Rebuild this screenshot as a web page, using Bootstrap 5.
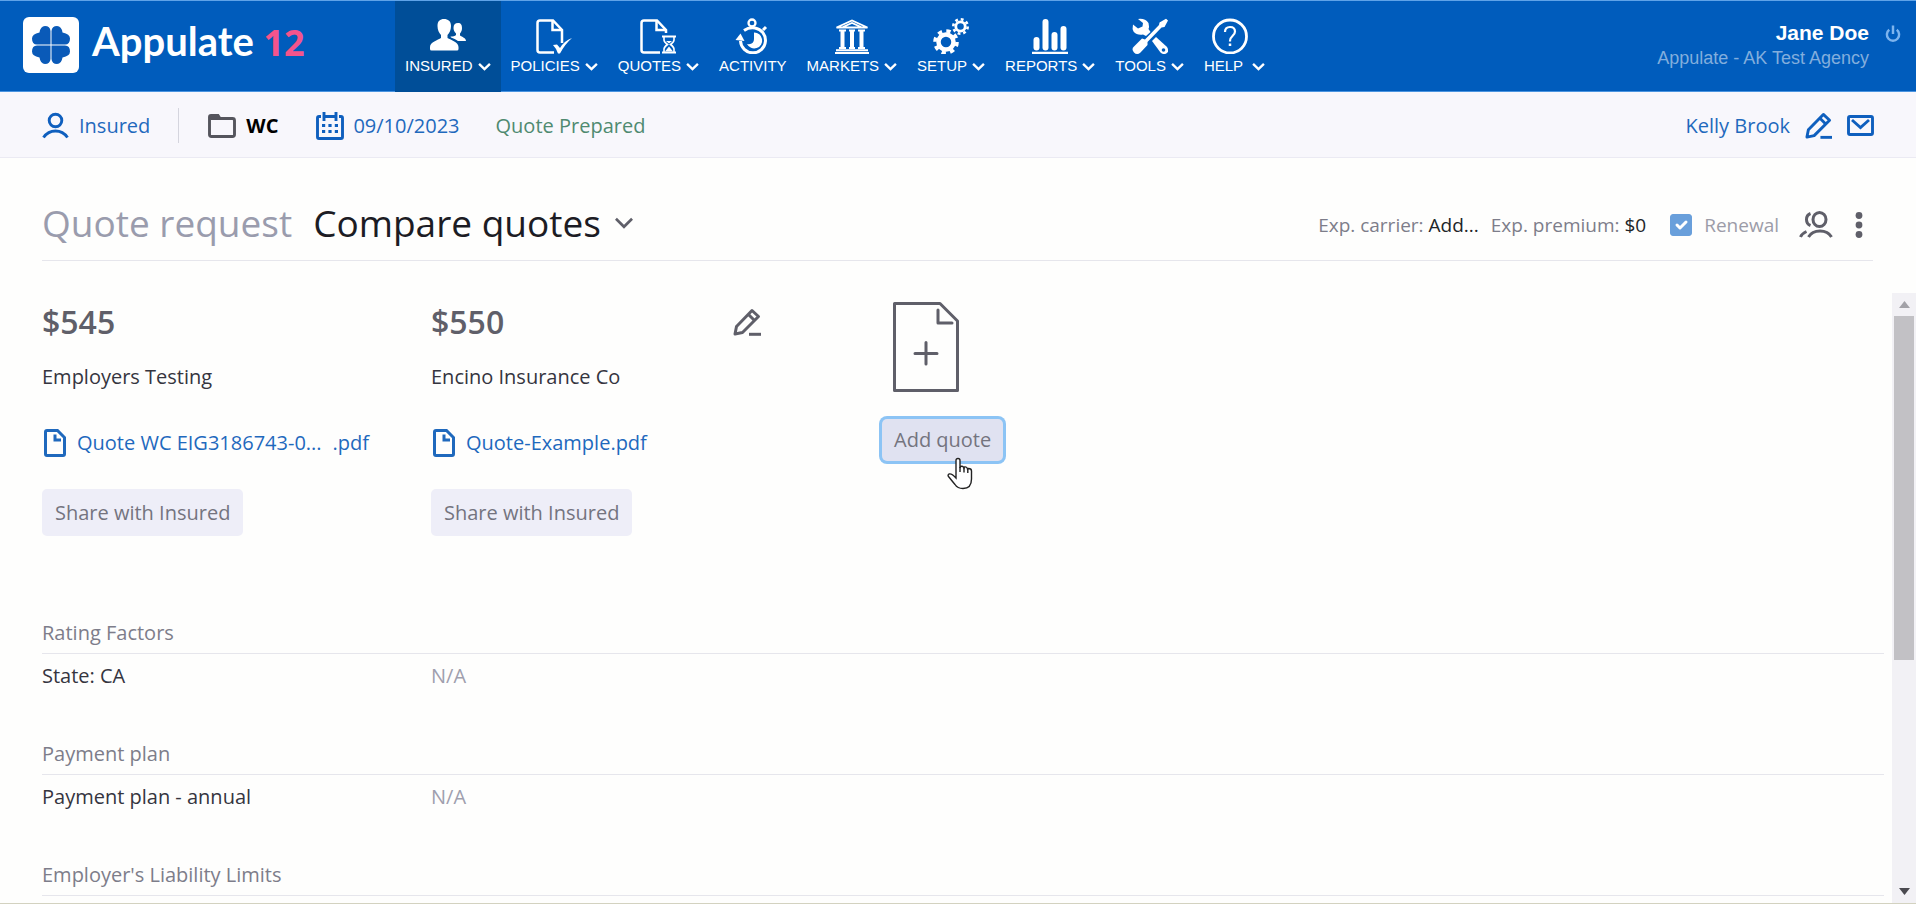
<!DOCTYPE html>
<html lang="en">
<head>
<meta charset="utf-8">
<meta name="viewport" content="width=device-width, initial-scale=1">
<title>Appulate - Compare quotes</title>
<link rel="stylesheet" href="https://cdn.jsdelivr.net/npm/bootstrap@5.3.0/dist/css/bootstrap.min.css">
<style>
  :root { --brand: #005cbc; --link: #1f69bd; --muted: #7d7d8a; --ink: #5f5f69; --line: #e6e6ec; }
  body { font-family: "Open Sans", sans-serif; font-size: 20px; line-height: 30px; color: #35353f; background: #fefefd; }
  a { color: var(--link); text-decoration: none; }
  svg { flex: none; display: block; }

  .topbar { background: var(--brand); height: 92px; border-top: 1px solid #5fa3e8; border-bottom: 1px solid #4a94e0; padding: 0 15px 0 23px; font-family: "Liberation Sans", sans-serif; }
  .brand-link { width: 372px; gap: 13px; }
  .brand-name { font: 700 40px/46px Lato, sans-serif; color: #fff; }
  .brand-name span { font: 700 36px/46px "Open Sans", sans-serif; color: #f4548c; }
  .topnav .nav-link { height: 91px; padding: 17px 10px 0; color: #fff; font-size: 15px; line-height: 18px; gap: 3px; }
  .topnav .nav-link.active { background: #004e98; height: 92px; }
  .nav-label { gap: 5px; }
  .user-name { font-size: 21px; line-height: 24px; font-weight: 700; color: #fff; }
  .user-agency { font-size: 18px; line-height: 26px; color: #82aedd; }

  .subbar { background: #f8f7fc; height: 66px; border-bottom: 1px solid #ebeaf3; padding: 2px 42px 0; }
  .subbar .rule { width: 1px; height: 35px; background: #d5d5de; margin: 0 29px 0 28px; }
  .subbar .pair { gap: 10px; }
  .subbar .date { margin-left: 38px; gap: 9px; }
  .subbar .status { color: #4f8a70; margin-left: 36px; }
  .subbar .tools { gap: 15px; }

  .page-head { margin: 0 43px 0 42px; height: 103px; border-bottom: 1px solid var(--line); }
  .title { font-size: 37px; line-height: 52px; font-weight: 400; padding-top: 28px; gap: 21px; }
  .title a { color: #9a9cad; }
  .title button { color: #1c1c24; background: none; border: 0; padding: 0; gap: 14px; }
  .facts { font-size: 19px; padding-top: 31px; }
  .soft { color: var(--muted); }
  .form-check-input.renew { width: 22px; height: 22px; margin: 0; border-radius: 3px; }
  .form-check-input.renew:checked { background-color: #699fdb; border-color: #699fdb; }
  .renew + label { color: #9c9ca8; }
  .icon-btn { border: 0; background: none; padding: 0; color: var(--ink); }
  .more { margin: 0 10px 0 22px; }

  .pane { padding: 0 8px 0 42px; }
  .quote { width: 389px; }
  .quote-price { font-size: 32px; line-height: 42px; font-weight: 600; color: var(--ink); }
  .edit-quote { margin-right: 59px; }
  .carrier { margin-top: 19px; }
  .file-link { gap: 11px; margin-top: 36px; padding-left: 2px; }
  .btn-soft { font-size: 20px; line-height: 30px; height: 47px; padding: 0 13px; background: #eeeef8; color: #74747f; border: 0; border-radius: 5px; }
  .btn-share { margin-top: 31px; }
  .btn-soft.is-focus { background: #e0e2f1; box-shadow: 0 0 0 3px #8cc4f5; height: 42px; padding: 0 12px; margin: 3px; }
  .add-quote { margin-left: 59px; padding-top: 1px; }
  .sheet { margin-left: 14px; }
  .pointer { left: 67px; top: 41px; }

  .factors { table-layout: fixed; margin: 58px 0 0; }
  .factors col.fit { width: 389px; }
  .factors th { font-weight: 400; color: var(--muted); padding: 24px 0 5px; border-bottom: 1px solid var(--line); }
  .factors td { padding: 7px 0 24px; }
  .factors .none { color: #a09fae; }

  .track { width: 24px; background: #f2f1f5; padding: 0 2px; flex: none; }
  .track .arrow { height: 23px; }
  .thumb { height: 61%; background: #c2c1c5; }
  .edge { height: 1px; background: #d3d2c0; flex: none; }
</style>
</head>
<body class="vh-100 d-flex flex-column overflow-hidden">

<svg width="0" height="0" class="position-absolute" aria-hidden="true">
  <symbol id="chev" viewBox="0 0 12 8"><path d="M1 1.5 6 6.3 11 1.5" fill="none" stroke="currentColor" stroke-width="2.2"/></symbol>
  <symbol id="pencil" viewBox="0 0 28 28"><g fill="none" stroke="currentColor" stroke-width="3" stroke-linejoin="round"><path d="M2 26 3.5 18.5 19 2.5 25.5 8.5 9.5 24.5Z"/><path d="M15.5 6.5 21.5 12.5"/></g><path d="M16 26.3H28" stroke="currentColor" stroke-width="3"/></symbol>
  <symbol id="file" viewBox="0 0 22 28"><path d="M3 1.5H13.5L20.5 8.5V25Q20.5 26.500 19 26.500H3Q1.500 26.500 1.500 25V3Q1.500 1.500 3 1.500Z" fill="none" stroke="currentColor" stroke-width="3"/><path d="M11 5.500V11H17" fill="none" stroke="currentColor" stroke-width="3"/></symbol>
</svg>

<header class="topbar d-flex flex-shrink-0">
  <a href="#" class="brand-link d-flex align-items-center pb-2 flex-shrink-0">
    <svg width="56" height="56" viewBox="0 0 56 56" class="align-self-start mt-3"><rect width="56" height="56" rx="6" fill="#fff"/>
      <g fill="#0a5ab8"><path id="leaf" d="M27.500 27.500V14Q27 9 22 9 17.500 9 16.500 15.500 9 17 9 21.500 9 27.500 14 27.500Z"/>
      <use href="#leaf" transform="matrix(-1 0 0 1 56 0)"/><use href="#leaf" transform="matrix(1 0 0 -1 0 56)"/><use href="#leaf" transform="matrix(-1 0 0 -1 56 56)"/></g></svg>
    <span class="brand-name">Appulate <span>12</span></span>
  </a>
  <nav aria-label="Main">
    <ul class="nav topnav flex-nowrap">
      <li><a href="#" class="nav-link active d-flex flex-column align-items-center"><svg width="36" height="36" viewBox="0 0 36 36" fill="#fff"><path d="M7.500 8C7.500 3 10 1 14 1S21 3 21 8C21 12 19.500 15 17.500 17V20C21 22 28.500 24 28.500 29V31Q28.500 32.500 27 32.500H1.500Q0 32.500 0 31V29C0 24 8 22 11 20V17C9 15 7.500 12 7.500 8Z"/><path d="M23.500 10C23.500 6.500 25 5 28 5S32 7 32 10 31 14 30 15.500V17.500C32 19 36 20 36 23H28C26 21.500 23.500 20.500 21 19.500L20.500 18.500C23 18.500 25 18 26 17V15.500C24.500 14 23.500 12 23.500 10Z"/></svg>
        <span class="nav-label d-flex align-items-center">INSURED <svg width="13" height="9"><use href="#chev"/></svg></span></a></li>
      <li><a href="#" class="nav-link d-flex flex-column align-items-center"><svg width="36" height="36" viewBox="0 0 36 36" fill="none" stroke="#fff" stroke-width="2.500"><path d="M18 34.500H4Q1.500 34.500 1.500 32V5Q1.500 2.500 4 2.500H17L26 12V25"/><path d="M16.500 2.500V12H26"/><path d="M17 27 21 26.500 24 30Q28 23 36 20 29 26 24 35.500H22Q20 30 17 27Z" fill="#fff" stroke="none"/></svg>
        <span class="nav-label d-flex align-items-center">POLICIES <svg width="13" height="9"><use href="#chev"/></svg></span></a></li>
      <li><a href="#" class="nav-link d-flex flex-column align-items-center"><svg width="36" height="36" viewBox="0 0 36 36" fill="none" stroke="#fff" stroke-width="2.500"><path d="M20 34.500H4Q1.500 34.500 1.500 32V5Q1.500 2.500 4 2.500H17L26 12V15"/><path d="M16.500 2.500V12H26"/><path d="M22 18.500H36M22 34.500H36" stroke-width="2"/><path d="M24 19V22Q24 24 27.500 26.500 24 29 24 31V34M34 19V22Q34 24 30.500 26.500 34 29 34 31V34" stroke-width="1.600"/><path d="M26 23H32L29 25.500ZM25 33.500 29 28.500 33 33.500Z" fill="#fff" stroke="none"/></svg>
        <span class="nav-label d-flex align-items-center">QUOTES <svg width="13" height="9"><use href="#chev"/></svg></span></a></li>
      <li><a href="#" class="nav-link d-flex flex-column align-items-center"><svg width="36" height="36" viewBox="0 0 36 36" fill="none" stroke="#fff" stroke-width="3"><circle cx="17" cy="5" r="3.500" stroke-width="2.300"/><path d="M17 8V11M28 12 31 9"/><path d="M9 12.500Q14 9 20 10A12.500 12.500 0 1 1 5.500 23"/><path d="M.5 22 5.500 15.500 9.500 23Z" fill="#fff" stroke="none"/><path d="M19 14.500A8 8 0 1 1 12 26Q19 27 19 21Z" fill="#fff" stroke="none"/></svg>
        <span>ACTIVITY</span></a></li>
      <li><a href="#" class="nav-link d-flex flex-column align-items-center"><svg width="36" height="36" viewBox="0 0 36 36" fill="none" stroke="#fff" stroke-width="1.800"><path d="M2.500 9.500 18 2.500 33.500 9.500ZM9 9 18 5 27 9"/><path d="M5 12.500H12M15 12.500H21M24 12.500H31M5 30H12M15 30H21M24 30H31"/><path d="M8.500 12V30M18 12V30M27.500 12V30" stroke-width="4"/><path d="M2 32.300H34M1 35H35" stroke-width="2"/></svg>
        <span class="nav-label d-flex align-items-center">MARKETS <svg width="13" height="9"><use href="#chev"/></svg></span></a></li>
      <li><a href="#" class="nav-link d-flex flex-column align-items-center"><svg width="36" height="36" viewBox="0 0 36 36" fill="none" stroke="#fff"><circle cx="13" cy="24" r="7.500" stroke-width="4.500"/><circle cx="13" cy="24" r="11" stroke-width="3.600" stroke-dasharray="4.320 4.320"/><circle cx="27.500" cy="8.500" r="4.700" stroke-width="2.800"/><circle cx="27.500" cy="8.500" r="7.200" stroke-width="2.600" stroke-dasharray="2.830 2.830"/></svg>
        <span class="nav-label d-flex align-items-center">SETUP <svg width="13" height="9"><use href="#chev"/></svg></span></a></li>
      <li><a href="#" class="nav-link d-flex flex-column align-items-center"><svg width="36" height="36" viewBox="0 0 36 36" fill="#fff"><rect x="1.500" y="19" width="6" height="13.500" rx="3"/><rect x="10.500" y="1" width="6" height="31.500" rx="3"/><rect x="19.500" y="14" width="6" height="18.500" rx="3"/><rect x="28.500" y="8" width="6" height="24.500" rx="3"/><path d="M0 33.700H36V36H0Z"/></svg>
        <span class="nav-label d-flex align-items-center">REPORTS <svg width="13" height="9"><use href="#chev"/></svg></span></a></li>
      <li><a href="#" class="nav-link d-flex flex-column align-items-center"><svg width="36" height="36" viewBox="0 0 36 36"><path d="M2 34.500Q-1 31 2 28.500L10 20.500 13 21.500 27 7 27.500 4.500 34 .8 36 2.500 32.500 9 29.500 9.500 15.500 24 15.500 27 8.500 34.500Q5 37.500 2 34.500Z" fill="#fff"/><path d="M6 1Q13 0 16.500 5 17.500 9 16.500 11L18.500 14 14 18 11 16.500Q5 17.500 1.500 13.500 0 11 1 6.500L6 10.500 10.500 8.500 11 5Z" fill="#fff"/><path d="M20 23 24 19 34.500 28.500Q37.500 32 35 35 32 37.500 28.500 34.500Z" fill="#fff"/><circle cx="31.500" cy="32" r="1.800" fill="#005cbc"/></svg>
        <span class="nav-label d-flex align-items-center">TOOLS <svg width="13" height="9"><use href="#chev"/></svg></span></a></li>
      <li><a href="#" class="nav-link d-flex flex-column align-items-start"><svg width="36" height="36" viewBox="0 0 36 36" fill="none" stroke="#fff" class="ms-2"><circle cx="18" cy="18.500" r="16.500" stroke-width="2.800"/><path d="M13 14Q13 9 18 9T23 13.500C23 18 18 17.500 18 23V23.500" stroke-width="2.200"/><path d="M18 25.500V28" stroke-width="2.500"/></svg>
        <span class="nav-label d-flex align-items-center">HELP <svg width="13" height="9" class="ms-1"><use href="#chev"/></svg></span></a></li>
    </ul>
  </nav>
  <div class="ms-auto d-flex gap-3 pt-1 mt-3 align-items-start">
    <div class="text-end"><div class="user-name">Jane Doe</div><div class="user-agency">Appulate - AK Test Agency</div></div>
    <button class="icon-btn mt-1" aria-label="Log out"><svg width="16" height="18" viewBox="0 0 17 18" fill="none" stroke="#7db4ee" stroke-width="2.600"><path d="M8.500 0V9M4.500 4.500A6.500 6.500 0 1 0 12.500 4.500"/></svg></button>
  </div>
</header>

<div class="subbar d-flex align-items-center flex-shrink-0">
  <a href="#" class="pair d-flex align-items-center"><svg width="27" height="27" viewBox="0 0 27 27" fill="none" stroke="#0f5fbe" stroke-width="2.900"><circle cx="13.500" cy="8.500" r="6.300"/><path d="M1.500 25.500Q6 19 13.500 19T25.500 25.500"/></svg>Insured</a>
  <span class="rule"></span>
  <span class="pair d-flex align-items-center fw-bold text-black"><svg width="28" height="24" viewBox="0 0 28 24"><path d="M3 4.500H24.500Q26.500 4.500 26.500 6.500V20.500Q26.500 22.500 24.500 22.500H3.500Q1.500 22.500 1.500 20.500V3Q1.500 1.500 3 1.500H10L12 4.500" fill="none" stroke="#55555d" stroke-width="2.900"/><path d="M1.500 2H10.500L12.500 5.500H1.500Z" fill="#55555d"/></svg>WC</span>
  <a href="#" class="pair date d-flex align-items-center"><svg width="28" height="28" viewBox="0 0 28 28" fill="none" stroke="#0f5fbe" stroke-width="2.900"><path d="M5 4.500H3Q1.500 4.500 1.500 6V25Q1.500 26.500 3 26.500H25Q26.500 26.500 26.500 25V6Q26.500 4.500 25 4.500H23M8 4.500H20M8 0V9M20 0V9"/><path d="M6 13.500H22M6 19.500H22" stroke-dasharray="3.200 3.200"/></svg>09/10/2023</a>
  <span class="status">Quote Prepared</span>
  <span class="tools ms-auto d-flex align-items-center">
    <a href="#">Kelly Brook</a>
    <button class="icon-btn" aria-label="Edit contact"><svg width="27" height="27" color="#0f5fbe"><use href="#pencil"/></svg></button>
    <button class="icon-btn" aria-label="Send email"><svg width="27" height="21" viewBox="0 0 27 21" fill="none" stroke="#0f5fbe" stroke-width="2.900"><rect x="1.500" y="1.500" width="24" height="18" rx="1.500"/><path d="M5 5 13.500 12.500 22 5"/></svg></button>
  </span>
</div>

<div class="page-head d-flex align-items-center justify-content-between flex-shrink-0">
  <h1 class="title m-0 d-flex">
    <a href="#">Quote request</a>
    <button class="d-flex align-items-center">Compare quotes <svg width="18" height="12" viewBox="0 0 19 12"><path d="M1 1.500 9.500 10 18 1.500" fill="none" stroke="#5f5f69" stroke-width="2.800"/></svg></button>
  </h1>
  <div class="facts d-flex align-items-center">
    <span class="soft">Exp. carrier: <a href="#" class="text-body">Add...</a></span>
    <span class="soft ms-2 ps-1">Exp. premium: <a href="#" class="text-body">$0</a></span>
    <span class="d-flex align-items-center gap-2 ms-4"><input type="checkbox" class="form-check-input renew" id="renewal" checked><label for="renewal" class="ms-1">Renewal</label></span>
    <button class="icon-btn ms-3 ps-1" aria-label="Team"><svg width="34" height="28" viewBox="0 0 34 28" fill="none" stroke="currentColor" stroke-width="3"><ellipse cx="20.500" cy="8.500" rx="6.500" ry="7"/><path d="M9.500 26Q13 20 21 20T32.500 26M1.500 26Q3 22.500 7.500 20.500M11.500 2.500Q7.500 4 7.500 8.500T11.500 14.500"/></svg></button>
    <button class="icon-btn more" aria-label="More"><svg width="8" height="26" viewBox="0 0 8 26" fill="currentColor"><circle cx="4" cy="3.500" r="3.400"/><circle cx="4" cy="13" r="3.400"/><circle cx="4" cy="22.500" r="3.400"/></svg></button>
  </div>
</div>

<div class="d-flex flex-grow-1 overflow-hidden pt-4 mt-2">
  <main class="pane flex-grow-1 overflow-hidden">
    <div class="d-flex pt-2">
      <section class="quote">
        <div class="quote-price">$545</div>
        <div class="carrier">Employers Testing</div>
        <a href="#" class="file-link d-flex align-items-center"><svg width="22" height="28"><use href="#file"/></svg><span>Quote WC EIG3186743-0...</span><span>.pdf</span></a>
        <button class="btn btn-soft btn-share">Share with Insured</button>
      </section>
      <section class="quote">
        <div class="quote-price d-flex justify-content-between align-items-center">$550 <button class="icon-btn edit-quote" aria-label="Edit quote"><svg width="28" height="28"><use href="#pencil"/></svg></button></div>
        <div class="carrier">Encino Insurance Co</div>
        <a href="#" class="file-link d-flex align-items-center"><svg width="22" height="28"><use href="#file"/></svg><span>Quote-Example.pdf</span></a>
        <button class="btn btn-soft btn-share">Share with Insured</button>
      </section>
      <section class="add-quote">
        <svg width="66" height="90" viewBox="0 0 66 90" class="sheet" fill="none" stroke="#5f5f69" stroke-width="3" stroke-linejoin="round" stroke-linecap="round"><path d="M1.500 1.500H47L64.500 19V88.500H1.500Z"/><path d="M45 8V21H59M33 40.500V62M22 51.500H44"/></svg>
        <div class="position-relative mt-4">
          <button class="btn btn-soft is-focus">Add quote</button>
          <svg class="pointer position-absolute" width="27" height="33" viewBox="0 0 27 33"><path d="M10 21V3.500Q10 1.500 12 1.500T14 3.500V11L14.500 9.500Q17 8.500 18 11L18.500 10Q21 9.500 21.500 12L22.500 11.500Q25.500 11.500 25.500 14V22Q25.500 31.500 17 31.500 11.500 31.500 9 27.500 6.500 24.500 2.500 19.500 1.500 18 3 17 5.500 16 10 21Z" fill="#fff" stroke="#222" stroke-width="1.400"/><path d="M14 10V15M18 11V15.500M21.800 12V16" stroke="#222" stroke-width="1.400"/></svg>
        </div>
      </section>
    </div>
    <table class="factors w-100">
      <colgroup><col class="fit"><col class="fit"><col></colgroup>
      <tbody>
        <tr><th colspan="3" scope="colgroup">Rating Factors</th></tr>
        <tr><td>State: CA</td><td class="none">N/A</td><td></td></tr>
        <tr><th colspan="3" scope="colgroup">Payment plan</th></tr>
        <tr><td>Payment plan - annual</td><td class="none">N/A</td><td></td></tr>
        <tr><th colspan="3" scope="colgroup">Employer's Liability Limits</th></tr>
      </tbody>
    </table>
  </main>
  <div class="track d-flex flex-column" aria-hidden="true">
    <div class="arrow d-flex align-items-center justify-content-center"><svg width="11" height="7"><path d="M0 7 5.500 0 11 7Z" fill="#a3a2a8"/></svg></div>
    <div class="flex-grow-1"><div class="thumb"></div></div>
    <div class="arrow d-flex align-items-center justify-content-center"><svg width="11" height="7"><path d="M0 0 5.500 7 11 0Z" fill="#4b4a50"/></svg></div>
  </div>
</div>
<div class="edge"></div>

<script src="https://cdn.jsdelivr.net/npm/bootstrap@5.3.0/dist/js/bootstrap.bundle.min.js"></script>
</body>
</html>
